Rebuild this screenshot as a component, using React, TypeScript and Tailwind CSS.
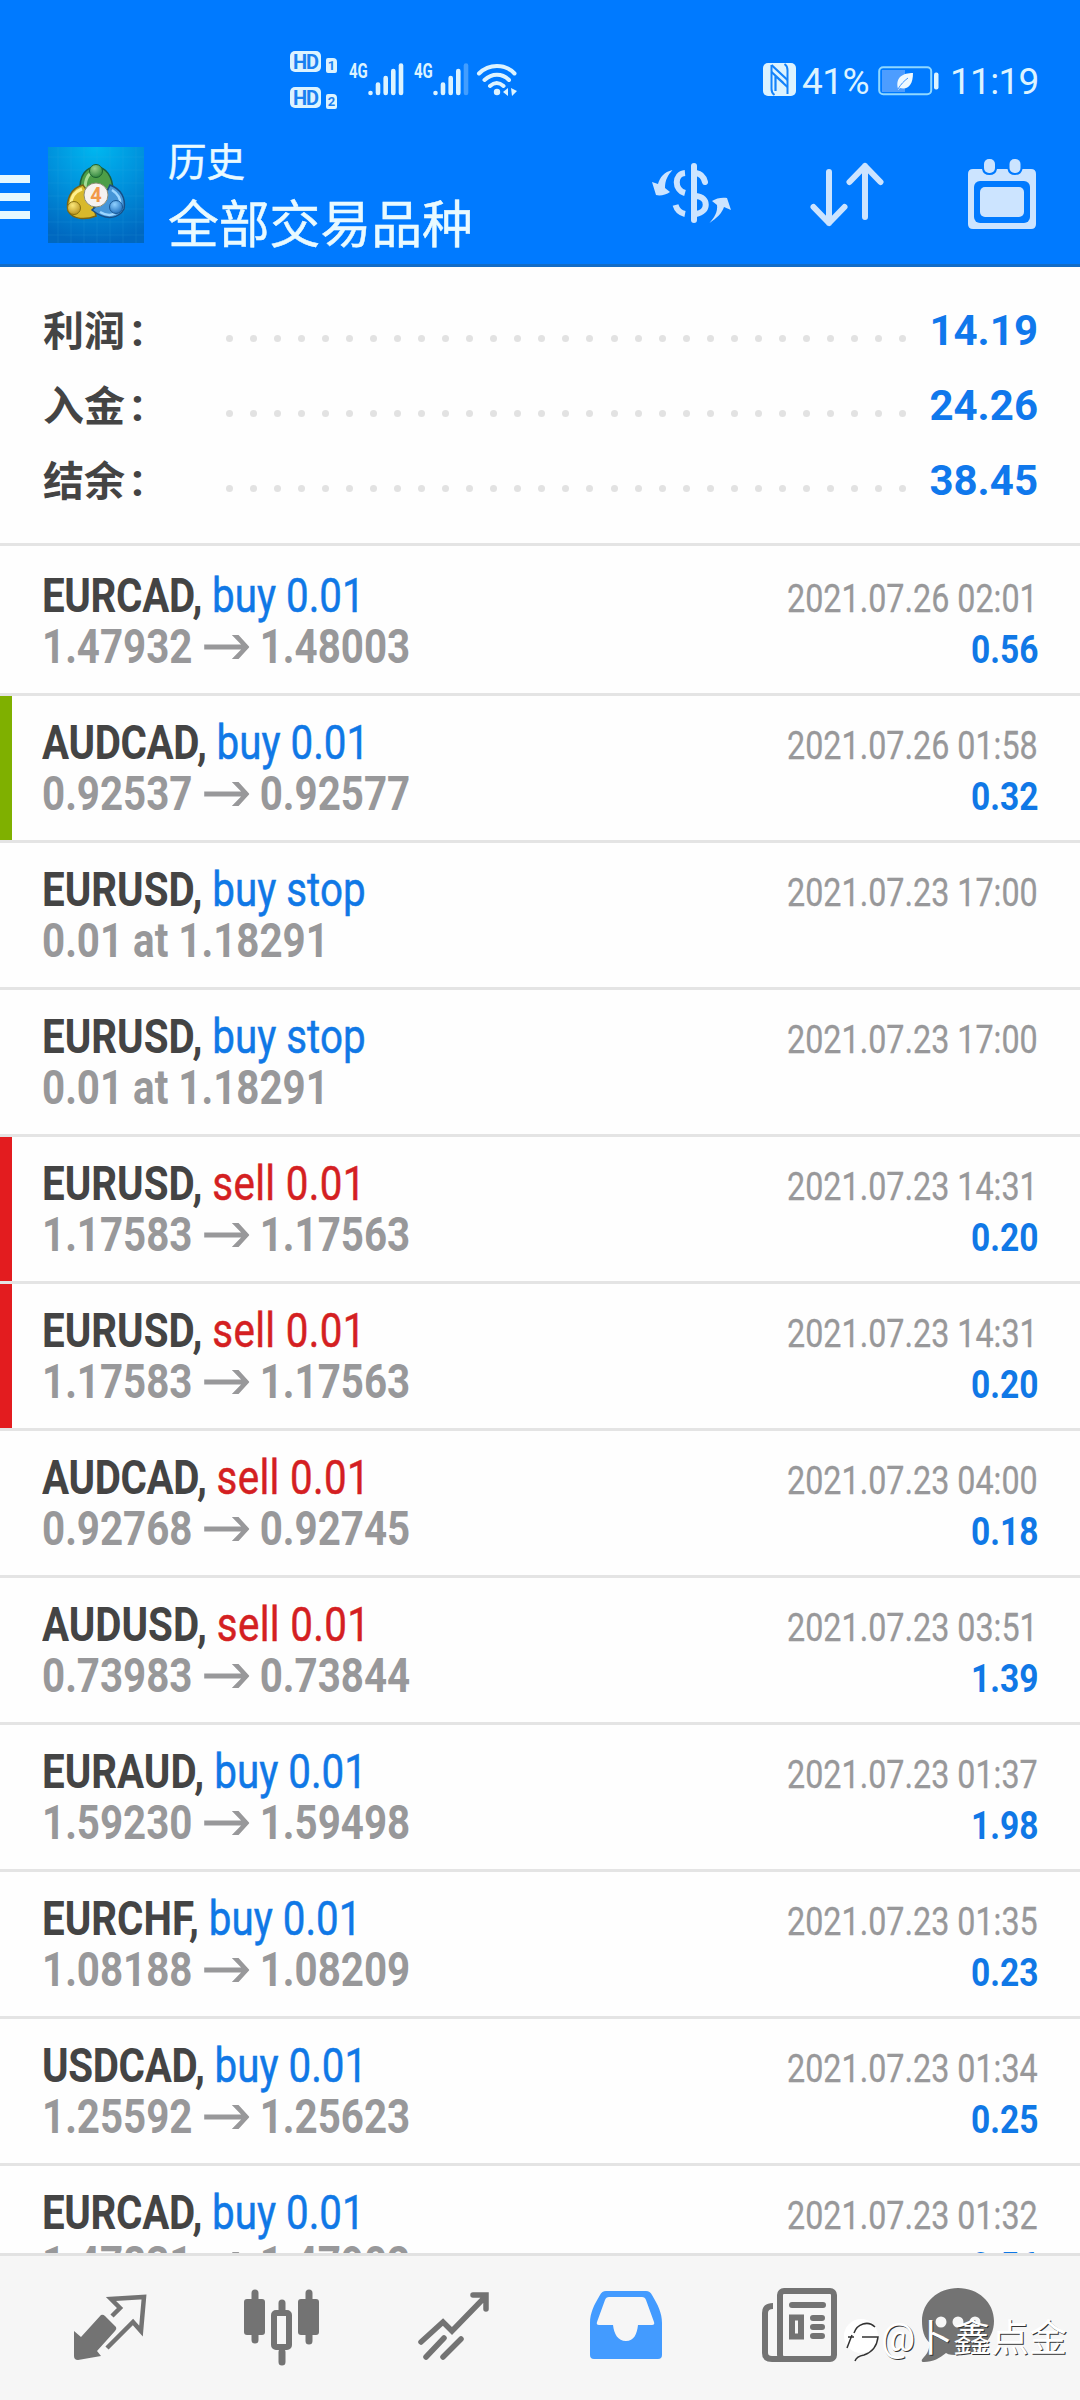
import React from 'react';

type Deal = {
  symbol: string;
  side: 'buy' | 'sell';
  action: string;
  from: string;
  to?: string;
  time: string;
  profit?: string;
  mark?: 'tp' | 'sl';
};

const deals: Deal[] = [
  { symbol: 'EURCAD', side: 'buy', action: 'buy 0.01', from: '1.47932', to: '1.48003', time: '2021.07.26 02:01', profit: '0.56' },
  { symbol: 'AUDCAD', side: 'buy', action: 'buy 0.01', from: '0.92537', to: '0.92577', time: '2021.07.26 01:58', profit: '0.32', mark: 'tp' },
  { symbol: 'EURUSD', side: 'buy', action: 'buy stop', from: '0.01 at 1.18291', time: '2021.07.23 17:00' },
  { symbol: 'EURUSD', side: 'buy', action: 'buy stop', from: '0.01 at 1.18291', time: '2021.07.23 17:00' },
  { symbol: 'EURUSD', side: 'sell', action: 'sell 0.01', from: '1.17583', to: '1.17563', time: '2021.07.23 14:31', profit: '0.20', mark: 'sl' },
  { symbol: 'EURUSD', side: 'sell', action: 'sell 0.01', from: '1.17583', to: '1.17563', time: '2021.07.23 14:31', profit: '0.20', mark: 'sl' },
  { symbol: 'AUDCAD', side: 'sell', action: 'sell 0.01', from: '0.92768', to: '0.92745', time: '2021.07.23 04:00', profit: '0.18' },
  { symbol: 'AUDUSD', side: 'sell', action: 'sell 0.01', from: '0.73983', to: '0.73844', time: '2021.07.23 03:51', profit: '1.39' },
  { symbol: 'EURAUD', side: 'buy', action: 'buy 0.01', from: '1.59230', to: '1.59498', time: '2021.07.23 01:37', profit: '1.98' },
  { symbol: 'EURCHF', side: 'buy', action: 'buy 0.01', from: '1.08188', to: '1.08209', time: '2021.07.23 01:35', profit: '0.23' },
  { symbol: 'USDCAD', side: 'buy', action: 'buy 0.01', from: '1.25592', to: '1.25623', time: '2021.07.23 01:34', profit: '0.25' },
  { symbol: 'EURCAD', side: 'buy', action: 'buy 0.01', from: '1.47831', to: '1.47902', time: '2021.07.23 01:32', profit: '0.56' },
];

const totals = [
  { label: '利润', value: '14.19' },
  { label: '入金', value: '24.26' },
  { label: '结余', value: '38.45' },
];

function HdBadge({ sim }: { sim: string }) {
  return (
    <div className="flex h-[21px] items-start gap-[5px]">
      <span className="flex h-[21px] w-[31px] items-center justify-center rounded-[5px] bg-[#dcf3ff] text-[20px] leading-none font-bold tracking-[-1px] text-[#1a80f0]">HD</span>
      <span className="mt-[7px] flex h-[15px] w-[11px] items-center justify-center rounded-[2px] rounded-tr-[4px] bg-[#dcf3ff] text-[13px] leading-none font-bold text-[#1a80f0]">{sim}</span>
    </div>
  );
}

function Signal({ weak }: { weak?: boolean }) {
  return (
    <div className="flex items-start">
      <span className="w-[19px] origin-left scale-x-[0.75] text-[20px] leading-[16px] font-bold">4G</span>
      <svg width="36" height="34" viewBox="0 0 36 34" className="-mt-px" stroke="#dcf3ff" strokeWidth="4.6" strokeLinecap="round">
        <path d="M2.5 31v0M10 31v-8.500M17.700 31v-15M25.300 31v-22" />
        <path d="M33 31V3.500" opacity={weak ? 0.3 : 1} />
      </svg>
    </div>
  );
}

function StatusBar() {
  return (
    <div className="flex h-[130px] items-start pr-[43px] pl-[290px] text-[#dcf3ff]">
      <div className="mt-[51px] flex flex-col gap-[15px]">
        <HdBadge sim="1" />
        <HdBadge sim="2" />
      </div>
      <div className="mt-[63px] ml-[12px] flex gap-[10px]">
        <Signal />
        <Signal weak />
      </div>
      <svg width="42" height="36" viewBox="0 0 42 36" className="mt-[62px] ml-[7px]" fill="none" stroke="#dcf3ff" strokeWidth="4" strokeLinecap="round">
        <path d="M3 11.500C13 1.500 29 1.500 38.500 11.500M8.500 18C16 11 26 11 33 18M14 24C18.500 20 23 20 27.500 24" />
        <circle cx="21" cy="30" r="3.200" fill="#dcf3ff" stroke="none" />
        <path d="M32 26v8l-5-4zM35 26l6 3-5 5z" fill="#dcf3ff" stroke="none" />
      </svg>
      <div className="mt-[63px] ml-auto flex items-start">
        <svg width="33" height="33" viewBox="0 0 33 33">
          <rect width="33" height="33" rx="5" fill="#dcf3ff" />
          <path d="M8.500 2v24q0 4 3 6M24.500 31V7q0-4-3-6" fill="none" stroke="#1483fb" strokeWidth="2" />
          <path d="M8.500 2l16 15M12.500 13l12 11M8.500 9l12 11M12.500 13v15" fill="none" stroke="#1483fb" strokeWidth="2.200" />
        </svg>
        <span className="ml-[6px] w-[65px] text-[37px] leading-[38px] tracking-[-0.5px] whitespace-nowrap">41%</span>
        <svg width="62" height="30" viewBox="0 0 62 30" className="mt-[3px] ml-[11px]">
          <rect x="1.200" y="1.200" width="52" height="27" rx="4" fill="none" stroke="#8fd8ff" strokeWidth="2" />
          <path d="M4 4h23v22H4z" fill="#4d9dff" />
          <rect x="56" y="6.500" width="4.500" height="17" rx="2" fill="#dcf3ff" />
          <path d="M20 23C17 11 25 7 35 7c0 12-5 17-13 15l-2 2z" fill="#eef9ff" />
          <path d="M20 23c3-5 6-8 10-11" stroke="#3a92ff" strokeWidth="1" fill="none" />
        </svg>
        <span className="ml-[10px] w-[87px] text-[37px] leading-[38px] tracking-[-0.7px] whitespace-nowrap">11:19</span>
      </div>
    </div>
  );
}

function AppLogo() {
  return (
    <svg width="96" height="96" viewBox="0 0 96 96" className="ml-[18px]">
      <defs>
        <radialGradient id="sky" cx=".5" cy="0" r="1">
          <stop offset="0" stopColor="#00b7f0" />
          <stop offset=".5" stopColor="#0091dc" />
          <stop offset="1" stopColor="#0068c0" />
        </radialGradient>
        <radialGradient id="green" cx=".4" cy=".3" r=".8"><stop offset="0" stopColor="#9bd08c" /><stop offset="1" stopColor="#247f35" /></radialGradient>
        <radialGradient id="gold" cx=".4" cy=".3" r=".8"><stop offset="0" stopColor="#fbe77a" /><stop offset="1" stopColor="#b48b14" /></radialGradient>
        <radialGradient id="blue" cx=".4" cy=".3" r=".8"><stop offset="0" stopColor="#8fd0ff" /><stop offset="1" stopColor="#1467b8" /></radialGradient>
      </defs>
      <rect width="96" height="96" fill="url(#sky)" />
      <path d="M10 0v96M23 0v96M36 0v96M49 0v96M62 0v96M75 0v96M88 0v96M0 10h96M0 23h96M0 36h96M0 49h96M0 62h96M0 75h96M0 88h96" stroke="#35b8ee" strokeOpacity=".15" />
      <path d="M32 45C31 27 39 20 48 20s17 8 17 25l-7 8H38z" fill="#4d9e48" stroke="#1d5f3a" strokeWidth="1.500" />
      <path d="M37 43c0-12 4-17 9-18" stroke="#a6dc95" strokeWidth="3" fill="none" />
      <path d="M35 38C22 41 18 54 20 64c5 9 18 9 28 5l-5-20z" fill="#d8b92c" stroke="#796414" strokeWidth="1.500" />
      <path d="M34 42c-8 3-11 9-11 15" stroke="#fff08d" strokeWidth="3" fill="none" />
      <path d="M62 38c11 4 16 13 14 24-5 9-17 13-32 1l11-10z" fill="#4696d8" stroke="#164f87" strokeWidth="1.500" />
      <path d="M64 43c6 4 9 8 8 14M52 65c5 3 11 4 16 1" stroke="#9cd6ff" strokeWidth="2.500" fill="none" />
      <circle cx="48" cy="24" r="6.500" fill="url(#green)" stroke="#1c6231" />
      <circle cx="26" cy="61" r="6.500" fill="url(#gold)" stroke="#88700f" />
      <circle cx="68" cy="60" r="6.500" fill="url(#blue)" stroke="#195895" />
      <circle cx="48" cy="48" r="12" fill="#f6f2f0" stroke="#8f8f78" />
      <text x="48" y="55" textAnchor="middle" fontSize="20" fontWeight="700" fill="#f2994a" fontFamily="Roboto">4</text>
    </svg>
  );
}

function Header() {
  return (
    <div className="flex h-[134px] items-start">
      <div className="mt-[45px] flex w-[30px] flex-col gap-[10px]">
        <div className="h-[8px] bg-[#e6f8ff]" />
        <div className="h-[8px] bg-[#e6f8ff]" />
        <div className="h-[8px] bg-[#e6f8ff]" />
      </div>
      <div className="mt-[17px]"><AppLogo /></div>
      <div className="ml-[24px] flex flex-col text-[#e9faff] [-webkit-text-stroke:0.5px_#e9faff]">
        <span className="mt-[5px] text-[38.5px] leading-[56px]">历史</span>
        <span className="mt-[3px] text-[50.8px] leading-[64px]">全部交易品种</span>
      </div>
      <div className="mt-[25px] mr-[44px] ml-auto flex items-start">
        <svg width="80" height="74" viewBox="0 0 80 74" fill="none" stroke="#cce4ff" strokeWidth="6" strokeLinecap="round">
          <path d="M42 11v54" />
          <path d="M33 18C22 19 22 35 33 38M23.500 50C25 55 28 58 33 59" strokeLinecap="butt" />
          <path d="M44 18q7 1 9 9M44 41c13 1 13 16 0 18" />
          <path d="M20.500 15C12 17 8 22 6 29l-6-2 4 13c4 1 10 0 14-3l-5-4c0-8 3-13 7.500-18zM57.500 68C65 63 70 58 72 52l7 3-4-12c-4-1-11 0-15 3l5 4c1 7-3 13-7.500 18z" fill="#cce4ff" stroke="none" />
        </svg>
        <svg width="74" height="74" viewBox="0 0 74 74" className="ml-[78px]" fill="none" stroke="#cce4ff" strokeWidth="6" strokeLinecap="round" strokeLinejoin="round">
          <path d="M19 17v51M3.500 52L19 68l15.500-16M55 62V11M39.500 27L55 11l15.500 16" />
        </svg>
        <svg width="68" height="74" viewBox="0 0 68 74" className="ml-[84px]">
          <path d="M5 14h58q5 0 5 5v50q0 5-5 5H5q-5 0-5-5V19q0-5 5-5z" fill="#cce4ff" />
          <path d="M14 0h15v14q-1 6-7.500 6T14 14zM39.500 0h15v14q-1 6-7.500 6t-7.500-6z" fill="#007aff" />
          <rect x="16" y="4" width="11" height="14" rx="5" fill="#cce4ff" />
          <rect x="41.500" y="4" width="11" height="14" rx="5" fill="#cce4ff" />
          <rect x="6" y="26" width="56" height="42" rx="6" fill="#007aff" />
          <rect x="12" y="32" width="44" height="30" rx="5" fill="#cce4ff" />
        </svg>
      </div>
    </div>
  );
}

function Totals() {
  return (
    <div className="flex h-[279px] flex-col border-b-[3px] border-[#e4e4e4] pt-[26px]">
      {totals.map((t) => (
        <div key={t.label} className="flex h-[75px] items-center pr-[42px] pl-[43px] font-bold">
          <span className="mt-[2px] w-[183px] text-[41px] leading-[73px] text-[#444444]">
            {t.label}
            <span className="ml-[6px] text-[46px]">:</span>
          </span>
          <div className="mt-[15px] flex w-[680px] justify-between">
            {Array.from({ length: 29 }).map((_, i) => (
              <span key={i} className="size-[7px] rounded-full bg-[#e2e2e2]" />
            ))}
          </div>
          <span className="ml-auto text-[42px] leading-[75px] text-[#1078ec]">{t.value}</span>
        </div>
      ))}
    </div>
  );
}

function DealRow({ deal, first }: { deal: Deal; first: boolean }) {
  return (
    <div className={`relative flex shrink-0 justify-between border-b-[3px] border-[#e4e4e4] pr-[42px] pl-[42px] ${first ? 'h-[150px] pt-[24px]' : 'h-[147px] pt-[21px]'}`}>
      {deal.mark && <div className={`absolute top-0 left-0 h-[144px] w-[12px] ${deal.mark === 'tp' ? 'bg-[#7fb000]' : 'bg-[#e31c1f]'}`} />}
      <div className="w-[440px] origin-left scale-x-[0.84] text-[48px] leading-[51px] whitespace-nowrap">
        <div>
          <span className={`font-bold text-[#444444] ${deal.symbol.endsWith('CAD') ? 'tracking-[-0.4px]' : ''}`}>{deal.symbol},</span>{' '}
          <span className={deal.side === 'buy' ? 'text-[#1078e6] [-webkit-text-stroke:0.5px_#1078e6]' : 'tracking-[0.4px] text-[#d41f22] [-webkit-text-stroke:0.5px_#d41f22]'}>{deal.action}</span>
        </div>
        <div className="flex items-center font-bold text-[#98989a]">
          <span>{deal.from}</span>
          {deal.to && (
            <>
              <svg width="54" height="30" viewBox="0 0 54 30" className="mr-[12px] ml-[14px]" fill="currentColor">
                <path d="M0 12.500H44L33 3h8l13 12-13 12h-8l11-9.500H0z" />
              </svg>
              <span>{deal.to}</span>
            </>
          )}
        </div>
      </div>
      <div className="flex flex-col items-end pt-[4px] text-[39px] leading-[51px] whitespace-nowrap">
        <div className="origin-right scale-x-[0.828] text-[#98989a] [-webkit-text-stroke:0.3px_#98989a]">{deal.time}</div>
        {deal.profit && <div className="origin-right scale-x-[0.86] font-bold text-[#1078e6]">{deal.profit}</div>}
      </div>
    </div>
  );
}

function BottomNav() {
  return (
    <div className="relative flex h-[147px] shrink-0 items-start border-t-[3px] border-[#e2e2e2] bg-[#f6f6f6] text-[#737373]">
      <svg width="74" height="68" viewBox="0 0 74 68" className="mt-[38px] ml-[73px]" fill="none" stroke="currentColor" strokeWidth="4.500">
        <path d="M1 37l7 6 20-22q2-1 4 1l11 11q1 2-1 4L24 57l4 5-23 4q-4 0-4-4z" fill="currentColor" stroke="none" />
        <path d="M39 22l8-8-9-9 33-2-3 34-8-9-26 26" />
      </svg>
      <svg width="76" height="78" viewBox="0 0 76 78" className="mt-[32px] ml-[97px]" fill="none" stroke="currentColor" strokeWidth="7" strokeLinecap="round">
        <path d="M11 5v47M65 5v48M38 15v8M38 64v10" />
        <rect x="0" y="11" width="21" height="36" rx="3" fill="currentColor" stroke="none" />
        <rect x="54" y="11" width="21" height="36" rx="3" fill="currentColor" stroke="none" />
        <rect x="30" y="25" width="15" height="34" rx="2" strokeWidth="6" />
      </svg>
      <svg width="72" height="70" viewBox="0 0 72 70" className="mt-[35px] ml-[98px]" fill="none" stroke="currentColor" strokeWidth="5.500" strokeLinecap="round">
        <path d="M3 51l22-20 9 9L67 6M55 4h13v14M8 66l18-19M25 66l18-18" />
      </svg>
      <svg width="72" height="68" viewBox="0 0 72 68" className="mt-[35px] ml-[100px]">
        <path fillRule="evenodd" d="M16 0h40q4 0 6 4c6 10 10 18 10 28v32q0 4-4 4H4q-4 0-4-4V32C0 22 4 14 10 4q2-4 6-4zM19 6q-3 0-4 3L7 31q-1 3 2 3h14c1 9 5 16 13 16s11-7 12-16h14q3 0 2-3L56 9q-1-3-4-3z" fill="#439bff" />
      </svg>
      <svg width="76" height="74" viewBox="0 0 76 74" className="mt-[32px] ml-[100px]" fill="none" stroke="currentColor" strokeWidth="6">
        <path d="M11 18q-8 0-8 7v40q0 6 7 6h14" />
        <rect x="18" y="3" width="54" height="68" rx="4" />
        <path d="M30 17h31M51 30h9M51 39h9M51 48h9" strokeLinecap="round" />
        <rect x="30" y="29.500" width="9" height="19" />
      </svg>
      <svg width="74" height="74" viewBox="0 0 74 74" className="mt-[32px] ml-[83px]">
        <path d="M37 0c20 0 36 14 36 33S57 67 37 67c-5 0-9 0-12-2C19 70 12 74 3 74c-4 0-2-3 0-5 4-4 5-8 6-14C3 50 1 42 1 33 1 14 17 0 37 0z" fill="currentColor" />
        <g fill="#f6f6f6"><circle cx="20" cy="34" r="5.500" /><circle cx="37" cy="34" r="5.500" /><circle cx="54" cy="34" r="5.500" /></g>
      </svg>
      <div className="absolute top-[57px] left-[844px] flex items-center text-white [text-shadow:1px_1px_0_#333]">
        <svg width="36" height="48" viewBox="0 0 36 48" fill="none">
          <circle cx="17" cy="22" r="17" fill="#fff" />
          <path d="M3 34L8 21M4 23h6M10 19C13 10 24 6 31 13M18 23h16c-1 9-5 15-14 18-6 1-8 3-9 6" stroke="#333" strokeWidth="1.500" />
        </svg>
        <span className="ml-px text-[38px] leading-[50px] whitespace-nowrap">@卜鑫点金</span>
      </div>
    </div>
  );
}

function App() {
  return (
    <div className="flex h-[2400px] w-[1080px] flex-col overflow-hidden bg-[#fefefe] font-['Roboto','Noto_Sans_CJK_SC',sans-serif]">
      <div className="h-[267px] shrink-0 border-b-[3px] border-[#136cc6] bg-[#007aff]">
        <StatusBar />
        <Header />
      </div>
      <Totals />
      <div className="flex min-h-0 flex-1 flex-col overflow-hidden">
        {deals.map((deal, i) => (
          <DealRow key={i} deal={deal} first={i === 0} />
        ))}
      </div>
      <BottomNav />
    </div>
  );
}

export default App;
